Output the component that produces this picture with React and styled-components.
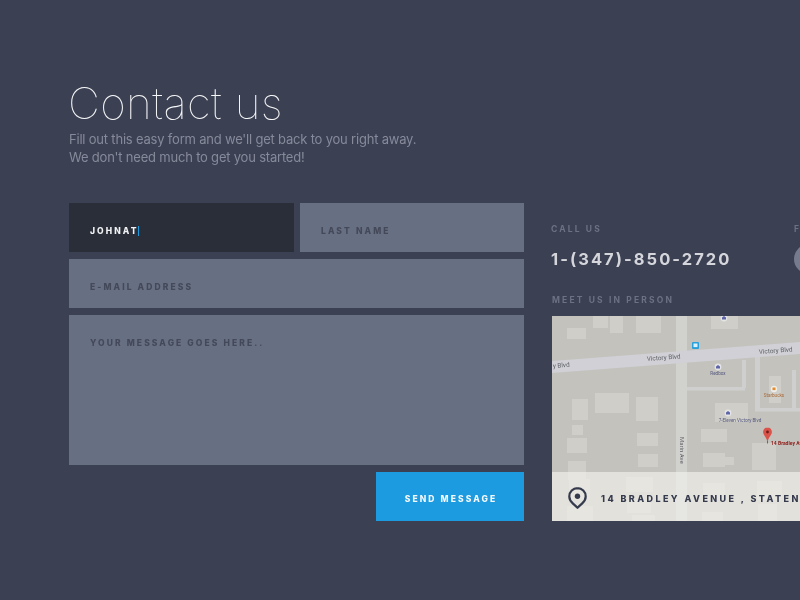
import React from 'react';
import styled, { createGlobalStyle } from 'styled-components';

const GlobalStyle = createGlobalStyle`
  html, body {
    margin: 0;
    height: 100%;
    overflow: hidden;
    background: #3b4053;
  }
`;

const Page = styled.div`
  width: 800px;
  height: 600px;
  box-sizing: border-box;
  padding: 76px 0 0 68px;
  overflow: hidden;
  will-change: transform;
  font-family: "Inter", "Liberation Sans", sans-serif;
`;

const Title = styled.h1`
  margin: 0;
  font-size: 44px;
  line-height: 54px;
  font-weight: 100;
  letter-spacing: 0.4px;
  color: #f6f7f8;
`;

const Intro = styled.p`
  margin: 0 0 37px 1px;
  font-size: 13px;
  line-height: 18px;
  letter-spacing: -0.2px;
  color: #868a9a;
`;

const Columns = styled.div`
  display: grid;
  grid-template-columns: 455px 272px;
  column-gap: 27px;
  margin-left: 1px;
`;

const Form = styled.form`
  display: flex;
  flex-direction: column;
  gap: 7px;
`;

const NameRow = styled.div`
  display: grid;
  grid-template-columns: 225px 224px;
  column-gap: 6px;
`;

const fieldText = `
  font-family: "Inter", "Liberation Sans", sans-serif;
  font-size: 8.5px;
  font-weight: 800;
  letter-spacing: 2.1px;
  text-transform: uppercase;
`;

const Input = styled.input`
  ${fieldText}
  box-sizing: border-box;
  width: 100%;
  height: 49px;
  padding: 6px 21px 0;
  border: 0;
  outline: 0;
  background: #676f82;
  color: #fff;
  &::placeholder {
    color: #444959;
    opacity: 1;
  }
`;

const ActiveField = styled.div`
  ${fieldText}
  box-sizing: border-box;
  height: 49px;
  padding: 7px 21px 0;
  display: flex;
  align-items: center;
  background: #2a2e39;
  color: #f1f2f4;
`;

const Caret = styled.span`
  width: 1px;
  height: 10px;
  margin-left: -1px;
  background: #1d9be0;
`;

const Message = styled.textarea`
  ${fieldText}
  display: block;
  box-sizing: border-box;
  width: 100%;
  height: 150px;
  padding: 23px 21px 0;
  border: 0;
  outline: 0;
  resize: none;
  background: #676f82;
  color: #fff;
  &::placeholder {
    color: #444959;
    opacity: 1;
  }
`;

const SendButton = styled.button`
  ${fieldText}
  align-self: flex-end;
  width: 148px;
  height: 49px;
  border: 0;
  padding: 4px 0 0 2px;
  background: #1d9be0;
  color: #f4f9fd;
`;

const Side = styled.aside`
  display: flex;
  flex-direction: column;
  padding-top: 20px;
  min-width: 0;
`;

const ContactRow = styled.div`
  display: grid;
  grid-template-columns: 243px 1fr;
  height: 71px;
`;

const Label = styled.div`
  font-size: 8.5px;
  line-height: 12px;
  font-weight: 700;
  letter-spacing: 2.15px;
  text-transform: uppercase;
  white-space: nowrap;
  color: #6c7183;
  padding-left: ${p => p.$indent || 0}px;
`;

const Phone = styled.div`
  margin-top: 14px;
  font-size: 16.5px;
  line-height: 20px;
  font-weight: 700;
  letter-spacing: 2.05px;
  white-space: nowrap;
  color: #d5d6dc;
`;

const SocialDot = styled.div`
  width: 30px;
  height: 30px;
  margin-top: 9px;
  border-radius: 50%;
  background: #767c8e;
`;

const MapCard = styled.div`
  position: relative;
  width: 248px;
  height: 205px;
  margin: 10px 0 0 1px;
  overflow: hidden;
  background: #c5c4be;
`;

const MapDrawing = styled.svg`
  display: block;
  filter: blur(0.4px);
`;

const AddressBar = styled.div`
  position: absolute;
  left: 0;
  right: 0;
  bottom: 0;
  height: 49px;
  box-sizing: border-box;
  padding: 3px 0 0 16px;
  display: flex;
  align-items: center;
  gap: 14px;
  background: rgba(240, 240, 236, 0.68);
`;

const PinWrap = styled.svg`
  flex-shrink: 0;
`;

const Address = styled.span`
  font-size: 9px;
  font-weight: 800;
  letter-spacing: 2.42px;
  text-transform: uppercase;
  white-space: nowrap;
  color: #353a4c;
`;

const buildings = [
  [567, 328, 19, 11], [593, 316, 15, 12], [610, 316, 13, 17], [636, 316, 25, 17],
  [711, 316, 27, 13], [572, 399, 16, 21], [595, 393, 34, 20], [636, 397, 22, 24],
  [769, 376, 12, 27], [715, 403, 33, 19], [572, 425, 11, 10], [567, 438, 20, 15],
  [568, 461, 18, 19], [569, 479, 21, 21], [567, 506, 26, 15], [637, 433, 21, 13],
  [638, 454, 20, 13], [626, 477, 27, 15], [627, 500, 24, 13], [632, 515, 23, 6],
  [701, 429, 26, 13], [703, 453, 22, 14], [725, 457, 9, 8], [752, 443, 24, 27],
  [703, 483, 22, 17], [702, 512, 21, 9], [757, 481, 25, 19], [758, 504, 19, 17],
];

const sideRoads = [
  [687, 387, 58, 3.5], [742, 360, 4, 28], [755, 357, 5, 54], [755, 408, 45, 3.5], [792, 370, 4, 38],
];

const PoiIcon = ({ x, y, fill }) => (
  <g>
    <circle cx={x} cy={y} r="3.4" fill="#e4e4e6" />
    <path d={`M${x - 2} ${y + 1.6}v-2.2l2-1.4 2 1.4v2.2z`} fill={fill} />
  </g>
);

const MapSvg = () => (
  <MapDrawing width="248" height="205" viewBox="552 316 248 205">
    <rect x="552" y="316" width="248" height="205" fill="#c3c2bc" />
    {buildings.map(([x, y, w, h]) => (
      <rect key={`${x}-${y}`} x={x} y={y} width={w} height={h} fill="#cfcec8" />
    ))}
    {sideRoads.map(([x, y, w, h]) => (
      <rect key={`${x}-${y}`} x={x} y={y} width={w} height={h} fill="#cfcfd0" />
    ))}
    <rect x="676" y="316" width="11" height="205" fill="#d1d1ce" />
    <polygon points="552,361 800,342 800,354 552,373" fill="#d0d0d6" />
    <g fontFamily="Roboto, sans-serif" fontSize="6.4" fill="#5f6268">
      <text x="553" y="368" transform="rotate(-4.4 553 368)">y Blvd</text>
      <text x="647" y="361" transform="rotate(-4.4 647 361)">Victory Blvd</text>
      <text x="759" y="354" transform="rotate(-4.4 759 354)">Victory Blvd</text>
      <text x="680" y="437" transform="rotate(90 680 437)" fontSize="6">Marin Ave</text>
    </g>
    <rect x="692" y="342" width="7" height="7" rx="1" fill="#27a0dc" />
    <rect x="693.5" y="343.5" width="4" height="3.6" fill="#dff1fb" />
    <PoiIcon x={718} y={367} fill="#5d64a8" />
    <PoiIcon x={728} y={413} fill="#5d64a8" />
    <PoiIcon x={724} y={318} fill="#5d64a8" />
    <circle cx="774" cy="389" r="3.2" fill="#eeeeea" />
    <rect x="772.5" y="387.5" width="3" height="2.6" fill="#e58a2a" />
    <g fontFamily="Roboto, sans-serif" fontSize="4.6" textAnchor="middle">
      <text x="718" y="375" fill="#55597f">Redbox</text>
      <text x="774" y="397" fill="#a86a3a">Starbucks</text>
      <text x="740" y="422" fill="#55597f">7-Eleven Victory Blvd</text>
    </g>
    <path d="M767.5 427.5c-2.6 0-4.4 2-4.4 4.4 0 3 3 4.4 4.1 9.2h.6c1.1-4.8 4.1-6.2 4.1-9.2 0-2.4-1.8-4.4-4.4-4.4z" fill="#d9534a" />
    <rect x="767.1" y="441" width="0.9" height="2.5" fill="#c0392b" />
    <circle cx="767.5" cy="432" r="1.4" fill="#6d1d18" />
    <text x="771" y="444.5" fontFamily="Roboto, sans-serif" fontSize="5" fontWeight="700" fill="#8e1f1c">14 Bradley Ave</text>
  </MapDrawing>
);

const PinIcon = () => (
  <PinWrap width="19" height="22" viewBox="0 0 19 22" fill="none">
    <path d="M9.5 1.2C5 1.2 1.3 4.8 1.3 9.4c0 3.1 1.8 5.4 3.7 7.2 1.6 1.5 3.3 2.9 4.5 4 1.2-1.1 2.9-2.5 4.5-4 1.9-1.8 3.7-4.1 3.7-7.2 0-4.6-3.7-8.2-8.2-8.2z" stroke="#353a4c" strokeWidth="2.2" />
    <circle cx="9.5" cy="9.2" r="2.7" fill="#353a4c" />
  </PinWrap>
);

const App = () => (
  <Page>
    <GlobalStyle />
    <Title>Contact us</Title>
    <Intro>
      Fill out this easy form and we'll get back to you right away.
      <br />
      We don't need much to get you started!
    </Intro>
    <Columns>
      <Form>
        <NameRow>
          <ActiveField>
            Johnat
            <Caret />
          </ActiveField>
          <Input placeholder="Last name" readOnly />
        </NameRow>
        <Input placeholder="E-mail address" readOnly />
        <Message placeholder="Your message goes here.." readOnly />
        <SendButton type="button">Send message</SendButton>
      </Form>
      <Side>
        <ContactRow>
          <div>
            <Label>Call us</Label>
            <Phone>1-(347)-850-2720</Phone>
          </div>
          <div>
            <Label>Follow us</Label>
            <SocialDot />
          </div>
        </ContactRow>
        <Label $indent={1}>Meet us in person</Label>
        <MapCard>
          <MapSvg />
          <AddressBar>
            <PinIcon />
            <Address>14 Bradley Avenue , Staten Island, NY</Address>
          </AddressBar>
        </MapCard>
      </Side>
    </Columns>
  </Page>
);

export default App;
